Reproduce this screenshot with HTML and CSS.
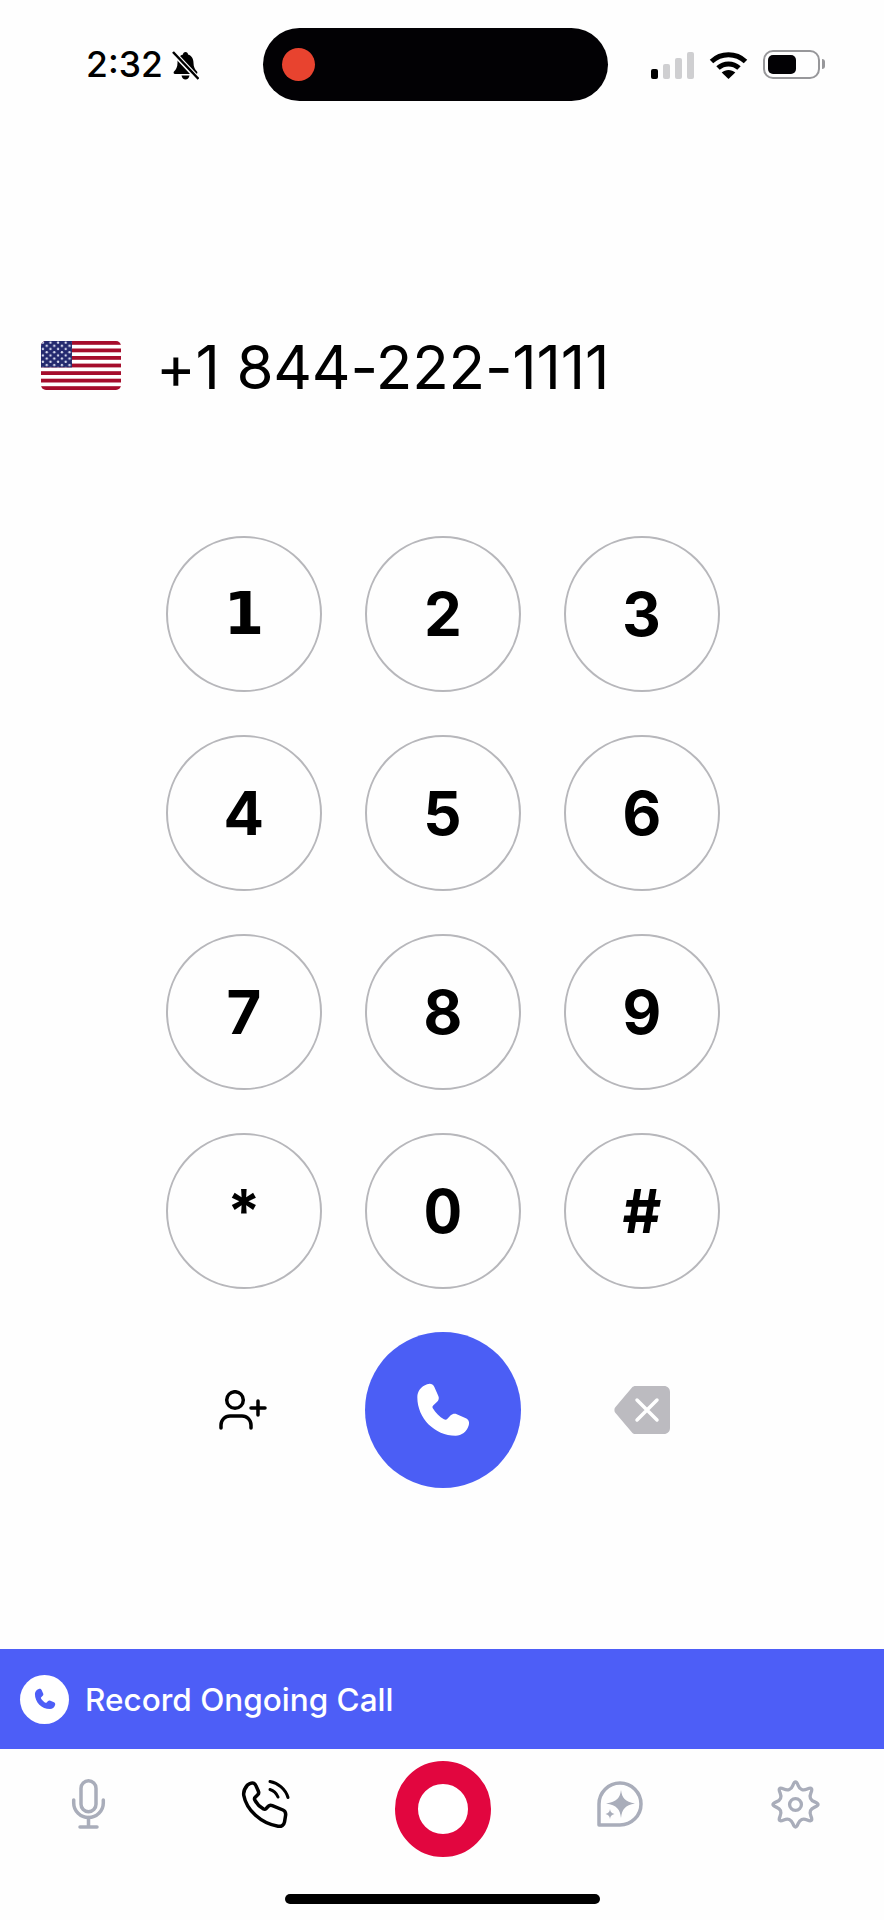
FILE: index.html
```html
<!DOCTYPE html>
<html lang="en">
<head>
  <meta charset="UTF-8">
  <meta name="viewport" content="width=device-width, initial-scale=1.0">
  <title>Dialer</title>
  <link rel="stylesheet" href="styles.css">
</head>
<body>
  <svg class="defs" width="0" height="0">
    <defs>
      <symbol id="handset" viewBox="0 0 24 24">
        <path d="M5.2 1C6.5.4 7.7.9 8.3 2.1L10 6C10.4 6.900 10.200 7.800 9.500 8.500L7.900 10C7.400 10.400 7.400 10.900 7.700 11.400C8.700 13.100 10.600 15 12.400 16C13 16.300 13.500 16.200 13.900 15.800L15.300 14.300C16 13.600 17 13.400 17.900 13.800L21.800 15.500C23 16 23.500 17.300 23 18.600C22.200 21.200 20 23 17.400 23C8.500 23 1 15.500 1 6.500C1 4 2.600 1.900 5.200 1Z"/>
      </symbol>
      <pattern id="stars" width="7.600" height="6.400" patternUnits="userSpaceOnUse">
        <circle cx="1.900" cy="1.600" r="1.200" fill="#dfe2f4"/>
        <circle cx="5.700" cy="4.800" r="1.200" fill="#dfe2f4"/>
      </pattern>
      <clipPath id="flagClip"><rect width="80" height="49" rx="5"/></clipPath>
    </defs>
  </svg>

  <div class="screen">
    <!-- Status bar -->
    <div class="status-bar">
      <div class="status-left">
        <span class="time">2:32</span>
        <svg class="bell" viewBox="0 0 27 29">
          <path d="M13.500 1C15 1 16 2 16 3.500C20 4.800 21.500 8 21.500 12C21.500 16 23 18.500 25 20.500C25.800 21.500 25.300 23 24 23H3C1.700 23 1.200 21.500 2 20.500C4 18.500 5.500 16 5.500 12C5.500 8 7 4.800 11 3.500C11 2 12 1 13.500 1ZM9.500 24.500H17.500C17 27 15.500 28.500 13.500 28.500C11.500 28.500 10 27 9.500 24.500Z"/>
          <path class="bell-gap" d="M0 0L27 29"/>
          <path class="bell-slash" d="M1 1L26.500 28"/>
        </svg>
      </div>
      <div class="island"><span class="rec-dot"></span></div>
      <div class="status-right">
        <div class="signal">
          <span class="bar bar-on bar-1"></span>
          <span class="bar bar-2"></span>
          <span class="bar bar-3"></span>
          <span class="bar bar-4"></span>
        </div>
        <svg class="wifi" viewBox="0 0 39 28">
          <path class="wifi-arc" d="M2.500 10.500C12 1.500 27 1.500 36.500 10.500"/>
          <path class="wifi-arc" d="M9 17C15 11.500 24 11.500 30 17"/>
          <path d="M19.500 28L12.700 21.500C16.500 18 22.500 18 26.300 21.500Z"/>
        </svg>
        <div class="battery"><span class="battery-level"></span></div>
        <span class="battery-nub"></span>
      </div>
    </div>

    <!-- Number -->
    <div class="number-row">
      <svg class="flag" viewBox="0 0 80 49">
        <g clip-path="url(#flagClip)">
          <rect width="80" height="49" fill="#fff"/>
          <g fill="#a50d2c">
            <rect width="80" height="3.800"/>
            <rect y="7.500" width="80" height="3.800"/>
            <rect y="15" width="80" height="3.800"/>
            <rect y="22.600" width="80" height="3.800"/>
            <rect y="30.200" width="80" height="3.800"/>
            <rect y="37.700" width="80" height="3.800"/>
            <rect y="45.200" width="80" height="3.800"/>
          </g>
          <rect width="31" height="26.400" fill="#23296e"/>
          <rect width="31" height="26.400" fill="url(#stars)"/>
        </g>
      </svg>
      <span class="number">+1 844-222-1111</span>
    </div>

    <!-- Keypad -->
    <div class="keypad">
      <button class="key key-one">1</button>
      <button class="key">2</button>
      <button class="key">3</button>
      <button class="key">4</button>
      <button class="key">5</button>
      <button class="key">6</button>
      <button class="key">7</button>
      <button class="key">8</button>
      <button class="key">9</button>
      <button class="key">*</button>
      <button class="key">0</button>
      <button class="key">#</button>

      <div class="action">
        <svg class="add-contact" viewBox="0 0 49 41">
          <circle cx="17" cy="10" r="8.300"/>
          <path d="M3 38V35C3 30 7 26 12 26H24C29 26 33 30 33 35V38"/>
          <path d="M40 11V25M33 18H47"/>
        </svg>
      </div>
      <button class="call-btn">
        <svg class="call-icon"><use href="#handset"/></svg>
      </button>
      <div class="action">
        <svg class="backspace" viewBox="0 0 56 48">
          <path class="backspace-body" d="M18 1.500C19 .500 20 0 21.500 0H50C53.500 0 56 2.500 56 6V42C56 45.500 53.500 48 50 48H21.500C20 48 19 47.500 18 46.500L1.500 27C0 25.500 0 22.500 1.500 21Z"/>
          <path class="backspace-x" d="M23 14L43 34M43 14L23 34"/>
        </svg>
      </div>
    </div>

    <!-- Banner -->
    <div class="banner">
      <span class="banner-badge"><svg class="banner-icon"><use href="#handset"/></svg></span>
      <span class="banner-text">Record Ongoing Call</span>
    </div>

    <!-- Bottom nav -->
    <nav class="tabbar">
      <div class="tab">
        <svg class="tab-icon mic" viewBox="0 0 33 50">
          <rect x="9" y="1.700" width="15" height="31" rx="7.500"/>
          <path d="M1.700 21V24C1.700 32 8.500 38.500 16.500 38.500C24.500 38.500 31.300 32 31.300 24V21"/>
          <path d="M16.500 38.500V48M8 48H25"/>
        </svg>
      </div>
      <div class="tab">
        <svg class="tab-icon active phone-waves" viewBox="0 0 47 48">
          <path d="M8 3.500C10.500 2.300 12.800 3 13.800 5.400L16.300 11C17 12.500 16.600 14 15.500 15L13.200 17.200C12.400 18 12.300 19 12.800 20C14.600 23.500 18 27 21.500 29C22.500 29.500 23.400 29.300 24.200 28.500L26.300 26.300C27.300 25.200 28.800 25 30.300 25.600L41 30C43.300 31 44 33.300 43.500 36L42.500 42C42 45 39.500 46.800 36 46.200C19 43.500 4.500 30 1.800 15.500C1.200 12 2.500 8.500 5.500 5Z"/>
          <path class="wave" d="M28 1.500C36 3 43.500 9 46 17.500"/>
          <path class="wave" d="M28 9.500C31.500 10.500 34.500 13.500 36 17"/>
        </svg>
      </div>
      <div class="tab">
        <button class="record-btn"></button>
      </div>
      <div class="tab">
        <svg class="tab-icon spark" viewBox="0 0 47 46">
          <path d="M2 44V23A21 21 0 1 1 23 44Z"/>
          <path class="spark-fill" d="M24 9C25 17 28 20.500 38 22.500C28 24.500 25 28 24 37C23 28 20 24.500 9 22.500C20 20.500 23 17 24 9Z"/>
          <path class="spark-fill" d="M13 28C13.400 31 14.500 32.200 17.500 33C14.500 33.800 13.400 35 13 38C12.600 35 11.500 33.800 8.500 33C11.500 32.200 12.600 31 13 28Z"/>
        </svg>
      </div>
      <div class="tab">
        <svg class="tab-icon gear" viewBox="0 0 50 50">
          <path d="M22.230 4.550Q25 -2.500 27.780 4.550T37.500 8.580T41.430 12.500T45.450 22.230T45.450 27.780T41.430 37.500T37.500 41.430T27.780 45.450T22.230 45.450T12.500 41.430T8.580 37.500T4.550 27.780T4.550 22.230T8.580 12.500T12.500 8.580T22.230 4.550Z"/>
          <circle cx="25" cy="25" r="6.300"/>
        </svg>
      </div>
    </nav>

    <div class="home-bar"></div>
  </div>
</body>
</html>
```

FILE: styles.css
```css
/* General styles */
* {
  box-sizing: border-box;
}
body {
  font-family: Inter, "Liberation Sans", sans-serif;
  margin: 0;
  padding: 0;
  background-color: #fefefe;
  color: #000;
}
button {
  padding: 0;
  border: none;
  background: none;
  cursor: pointer;
}
.defs {
  display: block;
  position: absolute;
}
.screen {
  display: flex;
  flex-direction: column;
  width: 884px;
  height: 1920px;
  padding-bottom: 16px;
  overflow: hidden;
}

/* Status bar */
.status-bar {
  display: flex;
  align-items: center;
  height: 73px;
  margin-top: 28px;
}
.status-left {
  display: flex;
  align-items: center;
  gap: 9px;
  width: 263px;
  padding-left: 86px;
}
.time {
  font-size: 35.500px;
  font-weight: 500;
  line-height: 40px;
}
.bell {
  width: 27px;
  height: 29px;
  margin-top: 2px;
}
.bell-gap {
  stroke: #fefefe;
  stroke-width: 5;
}
.bell-slash {
  stroke: #000;
  stroke-width: 2.500;
}
.island {
  display: flex;
  align-items: center;
  width: 345px;
  height: 73px;
  padding-left: 19px;
  background-color: #020104;
  border-radius: 37px;
}
.rec-dot {
  width: 33px;
  height: 33px;
  background-color: #e8432f;
  border-radius: 50%;
}
.status-right {
  display: flex;
  align-items: flex-end;
  height: 29px;
  margin-top: -1px;
  padding-left: 43px;
}
.signal {
  display: flex;
  align-items: flex-end;
  gap: 5px;
  height: 28px;
  margin-right: 15px;
}
.bar {
  width: 7px;
  background-color: #cfcfd1;
  border-radius: 2px;
}
.bar-on {
  background-color: #000;
}
.bar-1 { height: 10px; }
.bar-2 { height: 15px; }
.bar-3 { height: 21px; }
.bar-4 { height: 27px; }
.wifi {
  width: 39px;
  height: 28px;
  margin-right: 15px;
}
.wifi-arc {
  fill: none;
  stroke: #000;
  stroke-width: 5;
}
.battery {
  width: 57px;
  height: 29px;
  padding: 3px;
  border: 2px solid #97979a;
  border-radius: 10px;
}
.battery-level {
  display: block;
  width: 28px;
  height: 19px;
  background-color: #020104;
  border-radius: 5px;
}
.battery-nub {
  width: 3px;
  height: 10px;
  margin: 0 0 10px 2px;
  background-color: #97979a;
  border-radius: 0 3px 3px 0;
}

/* Number row */
.number-row {
  display: flex;
  align-items: center;
  gap: 38px;
  height: 50px;
  margin-top: 239px;
  padding-left: 41px;
}
.flag {
  width: 80px;
  height: 49px;
  margin-top: 1px;
  flex-shrink: 0;
}
.number {
  margin-left: -3px;
  padding-top: 4px;
  font-size: 60px;
  font-weight: 400;
  line-height: 50px;
  letter-spacing: -.2px;
  white-space: nowrap;
}

/* Keypad */
.keypad {
  display: grid;
  grid-template-columns: repeat(3, 156px);
  grid-auto-rows: 156px;
  gap: 43px;
  margin-top: 146px;
  padding-left: 166px;
}
.key {
  display: flex;
  align-items: center;
  justify-content: center;
  border: 2px solid #b7b7bb;
  border-radius: 50%;
  font-family: Inter, "Liberation Sans", sans-serif;
  font-size: 60px;
  font-weight: 700;
  font-feature-settings: "tnum";
  color: #000;
}
/* the keypad 1 has a foot, Inter's does not */
.key-one {
  font-family: "DejaVu Sans", sans-serif;
  font-size: 58px;
}
.action {
  display: flex;
  align-items: center;
  justify-content: center;
}
.add-contact {
  width: 49px;
  height: 41px;
  margin-right: 4px;
  fill: none;
  stroke: #000;
  stroke-width: 3.500;
  stroke-linecap: round;
}
.call-btn {
  display: flex;
  align-items: center;
  justify-content: center;
  background-color: #4b5ef5;
  border-radius: 50%;
}
.call-icon {
  width: 56px;
  height: 56px;
  fill: #fff;
}
.backspace {
  width: 56px;
  height: 48px;
}
.backspace-body {
  fill: #bcbbc0;
}
.backspace-x {
  fill: none;
  stroke: #fff;
  stroke-width: 3.500;
  stroke-linecap: round;
}

/* Banner */
.banner {
  display: flex;
  align-items: center;
  gap: 16px;
  height: 100px;
  margin-top: auto;
  padding-left: 20px;
  background-color: #4d5ef7;
}
.banner-badge {
  display: flex;
  align-items: center;
  justify-content: center;
  width: 49px;
  height: 49px;
  background-color: #fff;
  border-radius: 50%;
}
.banner-icon {
  width: 22px;
  height: 22px;
  fill: #4d5ef7;
}
.banner-text {
  font-size: 31.500px;
  font-weight: 500;
  color: #fff;
}

/* Bottom nav */
.tabbar {
  display: flex;
  height: 96px;
  margin-top: 12px;
}
.tab {
  display: flex;
  flex: 1;
  align-items: center;
  justify-content: center;
}
.tab-icon {
  margin-bottom: 10px;
  fill: none;
  stroke: #a9adba;
  stroke-width: 3.500;
  stroke-linecap: round;
  stroke-linejoin: round;
  overflow: visible;
}
.tab-icon.active {
  stroke: #000;
}
.mic {
  width: 33px;
  height: 50px;
}
.phone-waves {
  width: 47px;
  height: 48px;
}
.wave {
  stroke-width: 3;
}
.spark {
  width: 47px;
  height: 46px;
  margin-left: 3px;
}
.spark-fill {
  fill: #a9adba;
  stroke: none;
}
.gear {
  width: 47px;
  height: 47px;
}
.record-btn {
  width: 96px;
  height: 96px;
  margin-left: 2px;
  border: 23px solid #e2063f;
  border-radius: 50%;
  background-color: #fff;
}
.home-bar {
  width: 315px;
  height: 10px;
  margin: 37px auto 0;
  background-color: #000;
  border-radius: 5px;
}
```
